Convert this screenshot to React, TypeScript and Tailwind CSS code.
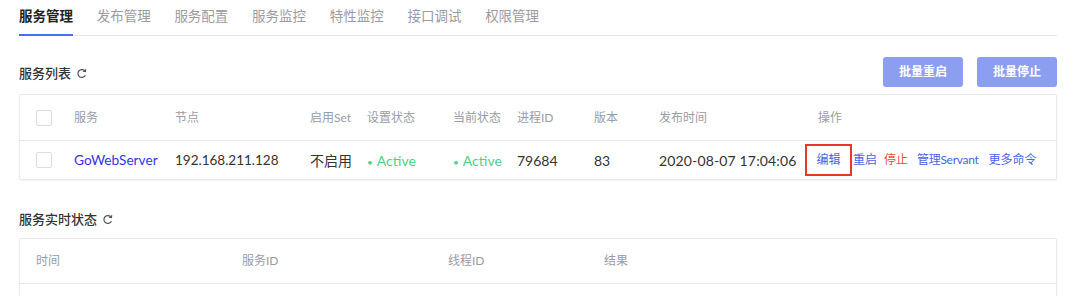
import React from "react";

const FONT = { fontFamily: 'Lato, "Noto Sans CJK SC", sans-serif' };

function Refresh() {
  return (
    <svg width="11" height="11" viewBox="0 0 12 12" className="ml-[5px] inline-block">
      <path d="M10 3.6 A4.3 4.3 0 1 0 10 8.4" fill="none" stroke="#555" strokeWidth="1.3" strokeLinecap="round" />
      <path d="M10.6 1.6 L10.3 4 L7.9 3.6" fill="none" stroke="#555" strokeWidth="1.2" strokeLinecap="round" strokeLinejoin="round" />
    </svg>
  );
}

function Checkbox() {
  return <div className="h-[16px] w-[16px] rounded-[2px] border border-[#dcdde3] bg-white" />;
}

const tabs = ["服务管理", "发布管理", "服务配置", "服务监控", "特性监控", "接口调试", "权限管理"];

export default function App() {
  return (
    <div className="h-[296px] w-[1080px] overflow-hidden bg-white pl-[19px] pr-[23px]" style={FONT}>
      {/* Tabs */}
      <div className="flex h-[36px] gap-[23.7px] border-b border-[#e6e6ea]">
        {tabs.map((t, i) => (
          <div
            key={t}
            className={
              i === 0
                ? "relative pt-[7px] text-[13.5px] font-bold leading-[18px] text-[#222]"
                : "pt-[7px] text-[13.5px] leading-[18px] text-[#9a9ba3]"
            }
          >
            {t}
            {i === 0 && <div className="absolute bottom-[-1px] left-0 right-0 h-[2px] bg-[#4b6ef0]" />}
          </div>
        ))}
      </div>

      {/* Section 1 header */}
      <div className="mt-[21px] flex h-[30px] items-center justify-between">
        <div className="flex items-center pt-[3px] text-[13px] font-medium text-[#333]">
          服务列表
          <Refresh />
        </div>
        <div className="flex gap-[14px]">
          <button className="h-[30px] w-[80px] rounded-[3px] bg-[#8c9ef0] text-[12px] font-bold text-white">批量重启</button>
          <button className="h-[30px] w-[80px] rounded-[3px] bg-[#8c9ef0] text-[12px] font-bold text-white">批量停止</button>
        </div>
      </div>

      {/* Table 1 */}
      <div className="mt-[7px] rounded-[2px] border border-[#e8e8ef] shadow-[0_1px_2px_rgba(0,0,0,0.06)]">
        <div className="flex h-[46px] items-center border-b border-[#e6e6ee] text-[12px] text-[#9a9ca5]">
          <div className="w-[54px] pl-[16px]"><Checkbox /></div>
          <div className="w-[101px]">服务</div>
          <div className="w-[135px]">节点</div>
          <div className="w-[57px]">启用Set</div>
          <div className="w-[86px]">设置状态</div>
          <div className="w-[64px]">当前状态</div>
          <div className="w-[77px]">进程ID</div>
          <div className="w-[65px]">版本</div>
          <div className="w-[159px]">发布时间</div>
          <div>操作</div>
        </div>
        <div className="flex h-[38px] items-center text-[14px] text-[#333]">
          <div className="w-[54px] pl-[16px]"><Checkbox /></div>
          <div className="w-[101px] text-[13.7px] text-[#3535e0]">GoWebServer</div>
          <div className="w-[135px] text-[13.5px]">192.168.211.128</div>
          <div className="w-[57px]">不启用</div>
          <div className="w-[86px] text-[#4fcf8c]"><span className="mr-[4px] text-[10px]">•</span>Active</div>
          <div className="w-[64px] text-[#4fcf8c]"><span className="mr-[4px] text-[10px]">•</span>Active</div>
          <div className="w-[77px]">79684</div>
          <div className="w-[65px]">83</div>
          <div className="w-[159px] tracking-[0.15px]">2020-08-07 17:04:06</div>
          <div className="flex items-center text-[12px] text-[#4a63e6]">
            <div className="-ml-[13px] flex h-[32px] w-[47px] items-center justify-center border-2 border-[#e8372b]">编辑</div>
            <span className="ml-[1px]">重启</span>
            <span className="ml-[7px] text-[#f04d3a]">停止</span>
            <span className="ml-[9px] tracking-[-0.3px]">管理Servant</span>
            <span className="ml-[10px]">更多命令</span>
          </div>
        </div>
      </div>

      {/* Section 2 */}
      <div className="mt-[30px] flex items-center text-[13px] font-medium leading-[18px] text-[#333]">
        服务实时状态
        <Refresh />
      </div>
      <div className="mt-[10px] rounded-[2px] border border-[#e8e8ef] shadow-[0_1px_2px_rgba(0,0,0,0.06)]">
        <div className="flex h-[45px] items-center border-b border-[#e6e6ee] pl-[16px] text-[12px] text-[#9a9ca5]">
          <div className="w-[206px]">时间</div>
          <div className="w-[206px]">服务ID</div>
          <div className="w-[156px]">线程ID</div>
          <div>结果</div>
        </div>
        <div className="h-[40px]" />
      </div>
    </div>
  );
}
